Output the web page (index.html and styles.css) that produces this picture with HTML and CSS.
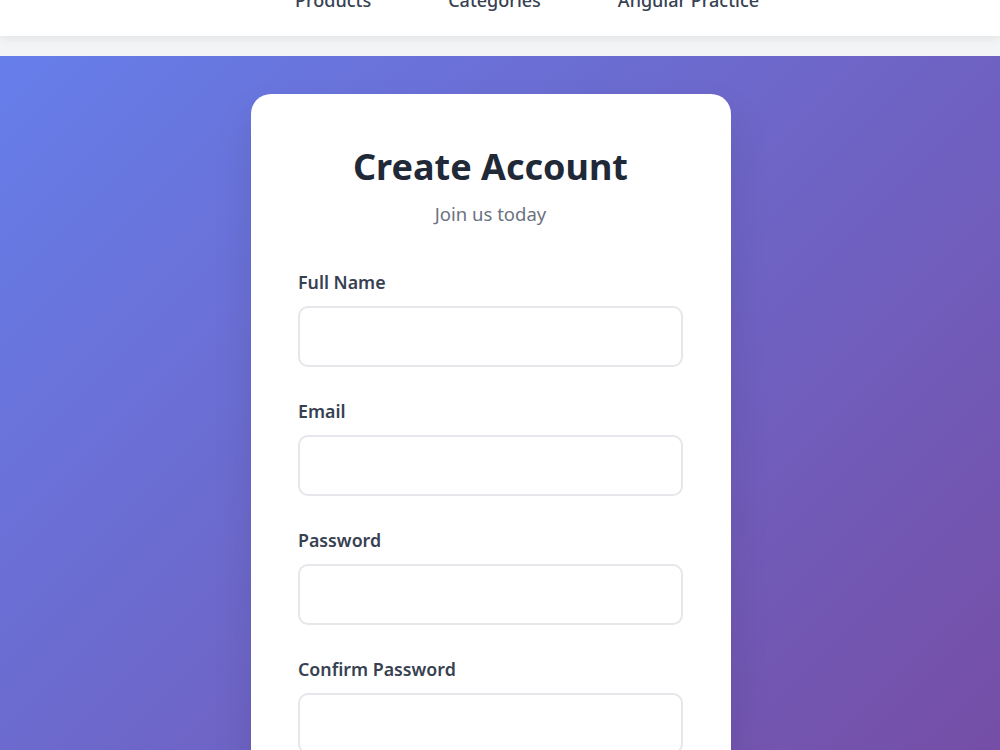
FILE: index.html
```html
<!DOCTYPE html>
<html lang="en">
<head>
<meta charset="utf-8">
<title>Create Account</title>
<link rel="stylesheet" href="styles.css">
</head>
<body>
<nav class="navbar">
  <ul class="nav-links">
    <li><a href="#">Products</a></li>
    <li><a href="#">Categories</a></li>
    <li><a href="#">Angular Practice</a></li>
  </ul>
</nav>
<main class="auth-section">
  <div class="auth-card">
    <h1 class="auth-title">Create Account</h1>
    <p class="auth-subtitle">Join us today</p>
    <form class="auth-form">
      <div class="form-group">
        <label class="form-label">Full Name</label>
        <input class="form-input" type="text">
      </div>
      <div class="form-group">
        <label class="form-label">Email</label>
        <input class="form-input" type="email">
      </div>
      <div class="form-group">
        <label class="form-label">Password</label>
        <input class="form-input" type="password">
      </div>
      <div class="form-group">
        <label class="form-label">Confirm Password</label>
        <input class="form-input" type="password">
      </div>
    </form>
  </div>
</main>
</body>
</html>
```
FILE: styles.css
```css
* { box-sizing: border-box; }
html, body { margin: 0; padding: 0; }
body {
  font-family: "Noto Sans", "Open Sans", sans-serif;
  background: #f3f4f6;
  color: #1f2937;
  overflow: hidden;
}
.navbar {
  background: #ffffff;
  height: 64px;
  margin-top: -28px;
  box-shadow: 0 2px 10px rgba(0, 0, 0, 0.08);
  position: relative;
  z-index: 2;
}
.nav-links {
  list-style: none;
  margin: 0;
  padding: 0 0 9px 295px;
  display: flex;
  gap: 77px;
  height: 100%;
  align-items: center;
}
.nav-links a {
  text-decoration: none;
  color: #374151;
  font-size: 18px;
  font-weight: 500;
}
.auth-section {
  margin-top: 20px;
  min-height: 800px;
  background: linear-gradient(135deg, #667eea 0%, #764ba2 100%);
  padding: 38px 0 0 251px;
}
.auth-card {
  width: 480px;
  background: #ffffff;
  border-radius: 20px;
  padding: 51px 48px 48px 47px;
  box-shadow: 0 20px 40px rgba(0, 0, 0, 0.1);
}
.auth-title {
  margin: 0;
  text-align: center;
  font-size: 36px;
  font-weight: 700;
  color: #1f2937;
  line-height: 1.2;
}
.auth-subtitle {
  margin: 13px 0 0;
  text-align: center;
  font-size: 18.5px;
  color: #6b7280;
}
.auth-form {
  margin-top: 44px;
  display: flex;
  flex-direction: column;
  gap: 32px;
}
.form-group {
  display: flex;
  flex-direction: column;
  gap: 12px;
}
.form-label {
  font-size: 17.8px;
  font-weight: 600;
  color: #374151;
}
.form-input {
  width: 100%;
  height: 61px;
  border: 2px solid #e5e7eb;
  border-radius: 10px;
  background: #ffffff;
  font-size: 16px;
  padding: 0 16px;
}
```
